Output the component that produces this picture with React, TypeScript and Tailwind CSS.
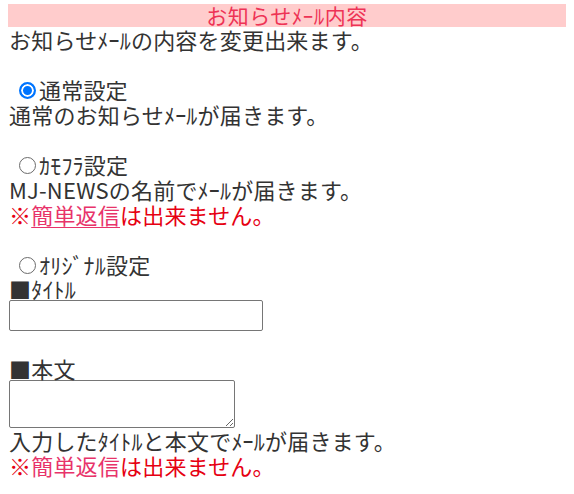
const font = "font-['Meiryo','Noto_Sans_CJK_JP',sans-serif]";

function NoReply() {
  return (
    <p className="text-[#e60012]">
      ※
      <a href="#" className="text-[#e8336a] underline decoration-1 underline-offset-[3px]">
        簡単返信
      </a>
      は出来ません。
    </p>
  );
}

function Radio({ checked, label }: { checked?: boolean; label: string }) {
  return (
    <label className="flex items-center">
      <input
        type="radio"
        name="mail"
        defaultChecked={checked}
        className="ml-[10px] mr-[3px] mt-[2px] h-[17px] w-[17px] shrink-0 appearance-none rounded-full border border-[#6b6b6b] bg-white checked:border-2 checked:border-[#0075ff] checked:bg-[#0075ff] checked:shadow-[inset_0_0_0_2px_white]"
      />
      <span>{label}</span>
    </label>
  );
}

export default function App() {
  return (
    <div className={`${font} bg-white px-2 pt-1 text-[22px] leading-[25px] tracking-[0.2px] text-[#333]`}>
      <h2 className="bg-[#ffcccc] text-center text-[21px] leading-[23px] tracking-[0.5px] font-normal text-[#ee3355]">
        お知らせﾒｰﾙ内容
      </h2>
      <div className="pl-[1px]">
        <p>お知らせﾒｰﾙの内容を変更出来ます。</p>
        <div className="h-[25px]" />
        <Radio checked label="通常設定" />
        <p>通常のお知らせﾒｰﾙが届きます。</p>
        <div className="h-[25px]" />
        <Radio label="ｶﾓﾌﾗ設定" />
        <p>MJ-NEWSの名前でﾒｰﾙが届きます。</p>
        <NoReply />
        <div className="h-[25px]" />
        <Radio label="ｵﾘｼﾞﾅﾙ設定" />
        <p className="leading-[23px]">■ﾀｲﾄﾙ</p>
        <input
          type="text"
          className="block h-[31px] w-[254px] rounded-[2px] border border-[#767676] bg-white px-1 text-base"
        />
        <div className="h-[25px]" />
        <p className="leading-[24px]">■本文</p>
        <textarea className="block h-[48px] w-[226px] rounded-[2px] border border-[#767676] bg-white text-base" />
        <p>入力したﾀｲﾄﾙと本文でﾒｰﾙが届きます。</p>
        <NoReply />
      </div>
    </div>
  );
}
